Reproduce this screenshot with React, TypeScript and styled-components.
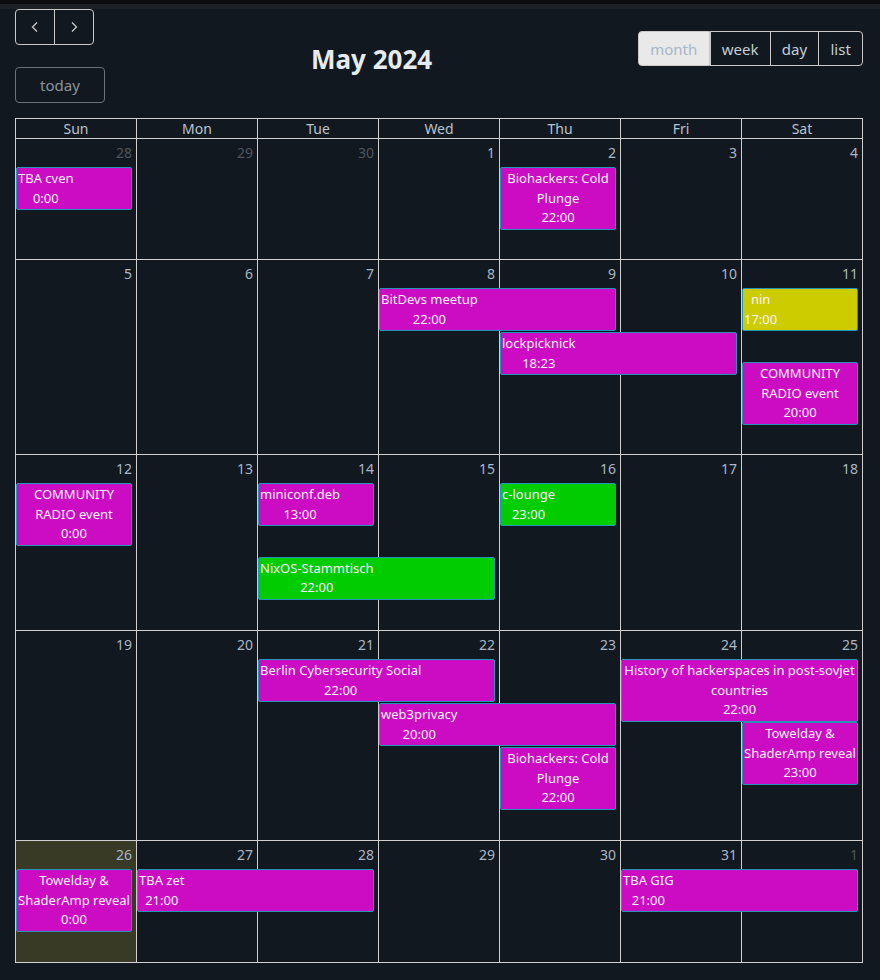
import React from 'react'
import styled, { createGlobalStyle } from 'styled-components'

type EventColor = 'magenta' | 'green' | 'yellow'

interface CalEvent {
  title: string
  time: string
  col: number
  span?: number
  offset?: number
  color?: EventColor
}

interface Day {
  n: number
  other?: boolean
  today?: boolean
}

interface Week {
  days: Day[]
  events: CalEvent[]
  extra?: number
}

const range = (from: number, to: number): Day[] =>
  Array.from({ length: to - from + 1 }, (_, i) => ({ n: from + i }))

const weeks: Week[] = [
  {
    days: [{ n: 28, other: true }, { n: 29, other: true }, { n: 30, other: true }, ...range(1, 4)],
    events: [
      { title: 'TBA cven', time: '0:00', col: 1 },
      { title: 'Biohackers: Cold Plunge', time: '22:00', col: 5 },
    ],
  },
  {
    days: range(5, 11),
    events: [
      { title: 'BitDevs meetup', time: '22:00', col: 4, span: 2 },
      { title: 'nin', time: '17:00', col: 7, color: 'yellow' },
      { title: 'lockpicknick', time: '18:23', col: 5, span: 2, offset: 44 },
      { title: 'COMMUNITY RADIO event', time: '20:00', col: 7, offset: 74 },
    ],
  },
  {
    days: range(12, 18),
    extra: 1,
    events: [
      { title: 'COMMUNITY RADIO event', time: '0:00', col: 1 },
      { title: 'miniconf.deb', time: '13:00', col: 3 },
      { title: 'c-lounge', time: '23:00', col: 5, color: 'green' },
      { title: 'NixOS-Stammtisch', time: '22:00', col: 3, span: 2, offset: 73.5, color: 'green' },
    ],
  },
  {
    days: range(19, 25),
    extra: 1,
    events: [
      { title: 'Berlin Cybersecurity Social', time: '22:00', col: 3, span: 2 },
      { title: 'History of hackerspaces in post-sovjet countries', time: '22:00', col: 6, span: 2 },
      { title: 'web3privacy', time: '20:00', col: 4, span: 2, offset: 44 },
      { title: 'Biohackers: Cold Plunge', time: '22:00', col: 5, offset: 88 },
      { title: 'Towelday & ShaderAmp reveal', time: '23:00', col: 7, offset: 63 },
    ],
  },
  {
    days: [{ n: 26, today: true }, ...range(27, 31), { n: 1, other: true }],
    extra: 1,
    events: [
      { title: 'Towelday & ShaderAmp reveal', time: '0:00', col: 1 },
      { title: 'TBA zet', time: '21:00', col: 2, span: 2 },
      { title: 'TBA GIG', time: '21:00', col: 6, span: 2 },
    ],
  },
]

const dayNames = ['Sun', 'Mon', 'Tue', 'Wed', 'Thu', 'Fri', 'Sat']
const views = ['month', 'week', 'day', 'list']

const eventColors: Record<EventColor, string> = {
  magenta: '#cb0cc3',
  green: '#00cc00',
  yellow: '#cccc00',
}

const GlobalStyle = createGlobalStyle`
  body {
    margin: 0;
    background: #12181f;
    font-family: "Noto Sans", "Open Sans", sans-serif;
  }
`

const TopStrip = styled.div`
  height: 4px;
  background: #0b0d10;
  border-bottom: 5px solid #1d2126;
`

const Calendar = styled.div`
  width: 848px;
  padding: 0 15px;
`

const Toolbar = styled.div`
  display: flex;
  justify-content: space-between;
  align-items: flex-start;
  margin-bottom: 15px;
`

const LeftChunk = styled.div`
  display: flex;
  flex-direction: column;
  align-items: flex-start;
  gap: 22px;
`

const Title = styled.h2`
  margin: 32px 0 0;
  font-size: 26px;
  font-weight: 700;
  line-height: 36px;
  color: #e6ebf0;
`

const ButtonGroup = styled.div<{ $top?: number }>`
  display: inline-flex;
  margin-top: ${(p) => p.$top ?? 0}px;
`

const Button = styled.button<{ $active?: boolean; $dim?: boolean; $w?: number; $h?: number }>`
  box-sizing: border-box;
  height: ${(p) => p.$h ?? 35}px;
  ${(p) => p.$w && `width: ${p.$w}px;`}
  padding: 0 11.2px;
  display: flex;
  align-items: center;
  justify-content: center;
  font-family: inherit;
  font-size: 15px;
  line-height: 22px;
  color: ${(p) => (p.$active ? '#a6b7c6' : p.$dim ? '#8b9299' : '#c4cfd9')};
  background: ${(p) => (p.$active ? '#e9e9e9' : 'transparent')};
  border: 1px solid ${(p) => (p.$dim ? '#6c7177' : '#c9c9c9')};
  border-radius: 4px;

  ${ButtonGroup} > & {
    border-radius: 0;
  }
  ${ButtonGroup} > & + & {
    margin-left: -1px;
  }
  ${ButtonGroup} > &:first-child {
    border-radius: 4px 0 0 4px;
  }
  ${ButtonGroup} > &:last-child {
    border-radius: 0 4px 4px 0;
  }
`

const Table = styled.div`
  border-right: 1px solid #cfcfcf;
  border-bottom: 1px solid #cfcfcf;
`

const HeaderRow = styled.div`
  display: grid;
  grid-template-columns: repeat(7, 1fr);
`

const HeaderCell = styled.div`
  border-top: 1px solid #cfcfcf;
  border-left: 1px solid #cfcfcf;
  text-align: center;
  font-size: 14px;
  line-height: 19px;
  color: #b8c4cf;
`

const WeekRow = styled.div<{ $extra: number }>`
  display: grid;
  grid-template-columns: repeat(7, 1fr);
  grid-template-rows: 29px auto ${(p) => 29.5 + p.$extra}px;
`

const DayCell = styled.div<{ $col: number; $today?: boolean }>`
  grid-column: ${(p) => p.$col};
  grid-row: 1 / 4;
  border-top: 1px solid #cfcfcf;
  border-left: 1px solid #cfcfcf;
  background: ${(p) => (p.$today ? '#393a26' : 'transparent')};
`

const DayNumber = styled.div<{ $other?: boolean }>`
  padding: 4px 4px 0;
  text-align: right;
  font-size: 14px;
  line-height: 19px;
  color: ${(p) => (p.$other ? '#4f555d' : '#a9b7c5')};
`

const EventBox = styled.div<{ $col: number; $span: number; $offset: number; $color: EventColor }>`
  grid-row: 2;
  grid-column: ${(p) => `${p.$col} / span ${p.$span}`};
  align-self: start;
  position: relative;
  margin: ${(p) => p.$offset}px 4px 0 1px;
  padding: 1px;
  background: ${(p) => eventColors[p.$color]};
  border: 1px solid #2196b8;
  border-radius: 2px;
  font-size: 13px;
  line-height: 19.5px;
  color: #fcf0fc;
`

const EventInner = styled.div`
  display: inline-block;
  max-width: 100%;
  text-align: center;
`

const Chevron = ({ dir }: { dir: 'left' | 'right' }) => (
  <svg width="10" height="12" viewBox="0 0 10 12">
    <path
      d={dir === 'left' ? 'M7 1.5 2.5 6 7 10.5' : 'M3 1.5 7.5 6 3 10.5'}
      fill="none"
      stroke="#c9c9c9"
      strokeWidth="1.3"
    />
  </svg>
)

const App: React.FC = () => (
  <>
    <GlobalStyle />
    <TopStrip />
    <Calendar>
      <Toolbar>
        <LeftChunk>
          <ButtonGroup>
            <Button $w={40} $h={36}>
              <Chevron dir="left" />
            </Button>
            <Button $w={40} $h={36}>
              <Chevron dir="right" />
            </Button>
          </ButtonGroup>
          <Button $dim $w={90} $h={36}>
            today
          </Button>
        </LeftChunk>
        <Title>May 2024</Title>
        <ButtonGroup $top={22}>
          {views.map((v) => (
            <Button key={v} $active={v === 'month'}>
              {v}
            </Button>
          ))}
        </ButtonGroup>
      </Toolbar>

      <Table>
        <HeaderRow>
          {dayNames.map((d) => (
            <HeaderCell key={d}>{d}</HeaderCell>
          ))}
        </HeaderRow>
        {weeks.map((week, wi) => (
          <WeekRow key={wi} $extra={week.extra ?? 0}>
            {week.days.map((day, di) => (
              <DayCell key={di} $col={di + 1} $today={day.today}>
                <DayNumber $other={day.other}>{day.n}</DayNumber>
              </DayCell>
            ))}
            {week.events.map((ev, ei) => (
              <EventBox
                key={ei}
                $col={ev.col}
                $span={ev.span ?? 1}
                $offset={ev.offset ?? 0}
                $color={ev.color ?? 'magenta'}
              >
                <EventInner>
                  <div>{ev.title}</div>
                  <div>{ev.time}</div>
                </EventInner>
              </EventBox>
            ))}
          </WeekRow>
        ))}
      </Table>
    </Calendar>
  </>
)

export default App
